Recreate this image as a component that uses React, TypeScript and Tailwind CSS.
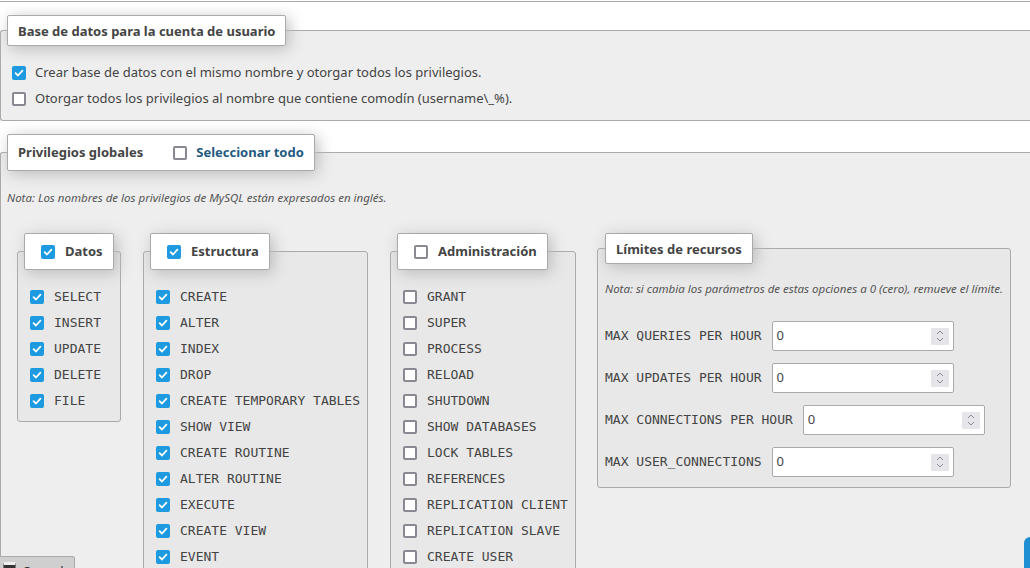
import React from "react";

function Cb({ checked }: { checked: boolean }) {
  return checked ? (
    <span className="inline-flex w-[14px] h-[14px] rounded-[2px] bg-[#1e9ae0] items-center justify-center shrink-0">
      <svg width="10" height="10" viewBox="0 0 10 10">
        <path d="M1.6 5.2 L4 7.5 L8.4 2.7" stroke="white" strokeWidth="1.8" fill="none" strokeLinecap="round" strokeLinejoin="round" />
      </svg>
    </span>
  ) : (
    <span className="inline-block w-[14px] h-[14px] rounded-[2px] border-2 border-[#8a8893] bg-white shrink-0" />
  );
}

function PrivRow({ label, checked }: { label: string; checked: boolean }) {
  return (
    <div className="flex items-center h-[26px] gap-[10px]">
      <Cb checked={checked} />
      <span className="font-['DejaVu_Sans_Mono',monospace] text-[13px] text-[#444] whitespace-nowrap">{label}</span>
    </div>
  );
}

function Group({ title, checked, items, width }: { title: string; checked: boolean; items: string[]; width: string }) {
  return (
    <fieldset className={`${width} shrink-0 border border-[#aaa] rounded-[3px] bg-[#e8e8e8] px-[6px] pt-[14px] pb-[7px]`}>
      <legend className="bg-white border border-[#aaa] rounded-[2px] shadow-[3px_3px_15px_#bbb] pl-[16px] pr-[10px] h-[37px]">
        <div className="flex items-center h-[35px] gap-[10px]">
          <Cb checked={checked} />
          <span className="font-bold text-[13px] text-[#444]">{title}</span>
        </div>
      </legend>
      <div className="pl-[6px]">
        {items.map((it) => (
          <PrivRow key={it} label={it} checked={checked} />
        ))}
      </div>
    </fieldset>
  );
}

function Spin() {
  return (
    <span className="flex flex-col items-center justify-center w-[18px] h-[17px] bg-[#e6e6ea] rounded-[1px]">
      <svg width="10" height="14" viewBox="0 0 10 14">
        <path d="M2 5 L5 2 L8 5" stroke="#8a8a92" strokeWidth="1" fill="none" />
        <path d="M2 9 L5 12 L8 9" stroke="#8a8a92" strokeWidth="1" fill="none" />
      </svg>
    </span>
  );
}

function LimitRow({ label }: { label: string }) {
  return (
    <div className="flex items-center gap-[10px] mb-[12px] last:mb-0">
      <span className="font-['DejaVu_Sans_Mono',monospace] text-[13px] text-[#444] whitespace-nowrap">{label}</span>
      <div className="flex items-center justify-between w-[182px] h-[30px] bg-white border border-[#aaa] rounded-[2px] pl-[4px] pr-[4px]">
        <span className="text-[13px] text-[#444]">0</span>
        <Spin />
      </div>
    </div>
  );
}

export default function App() {
  const datos = ["SELECT", "INSERT", "UPDATE", "DELETE", "FILE"];
  const estructura = [
    "CREATE",
    "ALTER",
    "INDEX",
    "DROP",
    "CREATE TEMPORARY TABLES",
    "SHOW VIEW",
    "CREATE ROUTINE",
    "ALTER ROUTINE",
    "EXECUTE",
    "CREATE VIEW",
    "EVENT",
    "TRIGGER",
  ];
  const admin = [
    "GRANT",
    "SUPER",
    "PROCESS",
    "RELOAD",
    "SHUTDOWN",
    "SHOW DATABASES",
    "LOCK TABLES",
    "REFERENCES",
    "REPLICATION CLIENT",
    "REPLICATION SLAVE",
    "CREATE USER",
  ];
  return (
    <div className="bg-white min-h-[568px] font-['Noto_Sans',sans-serif] text-[#444] text-[13px] overflow-hidden">
      <div className="h-[2px] border-b border-[#aaa]" />

      <fieldset className="mt-[13px] border border-r-0 border-[#aaa] rounded-l-[3px] bg-[#eee] px-[6px] pt-[14px] pb-[8px]">
        <legend className="bg-white border border-[#aaa] rounded-[2px] shadow-[3px_3px_15px_#bbb] px-[10px] h-[31px]">
          <div className="flex items-center h-[29px] pt-[3px] font-bold text-[13px] text-[#444]">Base de datos para la cuenta de usuario</div>
        </legend>
        <div className="pl-[5px]">
          <div className="flex items-center h-[26px] gap-[9px]">
            <Cb checked={true} />
            <span>Crear base de datos con el mismo nombre y otorgar todos los privilegios.</span>
          </div>
          <div className="flex items-center h-[26px] gap-[9px]">
            <Cb checked={false} />
            <span>Otorgar todos los privilegios al nombre que contiene comodín (username\_%).</span>
          </div>
        </div>
      </fieldset>

      <fieldset className="mt-[13px] border border-r-0 border-[#aaa] rounded-l-[3px] bg-[#eee] px-[6px] pt-[19px] pb-[20px]">
        <legend className="bg-white border border-[#aaa] rounded-[2px] shadow-[3px_3px_15px_#bbb] px-[10px] h-[37px]">
          <div className="flex items-center h-[35px] text-[13px]">
            <span className="font-bold text-[#444]">Privilegios globales</span>
            <span className="ml-[30px] flex items-center gap-[9px]">
              <Cb checked={false} />
              <span className="font-bold text-[#235a81]">Seleccionar todo</span>
            </span>
          </div>
        </legend>
        <div className="italic text-[11.5px] leading-[16px] text-[#555] whitespace-nowrap">
          Nota: Los nombres de los privilegios de MySQL están expresados en inglés.
        </div>
        <div className="flex items-start gap-[22px] mt-[27px] ml-[10px]">
          <Group title="Datos" checked={true} items={datos} width="w-[104px]" />
          <Group title="Estructura" checked={true} items={estructura} width="w-[225px]" />
          <Group title="Administración" checked={false} items={admin} width="w-[186px]" />
          <fieldset className="-ml-px w-[413px] shrink-0 border border-[#aaa] rounded-[3px] bg-[#e8e8e8] px-[7px] pt-[17px] pb-[10px]">
            <legend className="bg-white border border-[#aaa] rounded-[2px] shadow-[3px_3px_15px_#bbb] px-[10px] h-[31px]">
              <div className="flex items-center h-[29px] pt-[3px] font-bold text-[13px] text-[#444]">Límites de recursos</div>
            </legend>
            <div className="italic text-[11.5px] leading-[16px] text-[#555] whitespace-nowrap">
              Nota: si cambia los parámetros de estas opciones a 0 (cero), remueve el límite.
            </div>
            <div className="mt-[24px]">
              <LimitRow label="MAX QUERIES PER HOUR" />
              <LimitRow label="MAX UPDATES PER HOUR" />
              <LimitRow label="MAX CONNECTIONS PER HOUR" />
              <LimitRow label="MAX USER_CONNECTIONS" />
            </div>
          </fieldset>
        </div>
      </fieldset>

      <div className="fixed left-0 top-[556px] w-[75px] h-[26px] bg-[#cfcfcf] border-t border-r border-[#aaa] rounded-tr-[3px] flex items-start pt-[5px] pl-[3px] gap-[6px]">
        <span className="w-[13px] h-[13px] bg-[#333] border border-[#777] border-t-[3px] border-t-[#eee]" />
        <span className="text-[13px] leading-[13px] pt-[3px] text-[#333]">Consola</span>
      </div>
      <div className="fixed left-[1024px] top-[537px] w-[20px] h-[40px] bg-[#1f8fd3] rounded-tl-[6px]" />
    </div>
  );
}
